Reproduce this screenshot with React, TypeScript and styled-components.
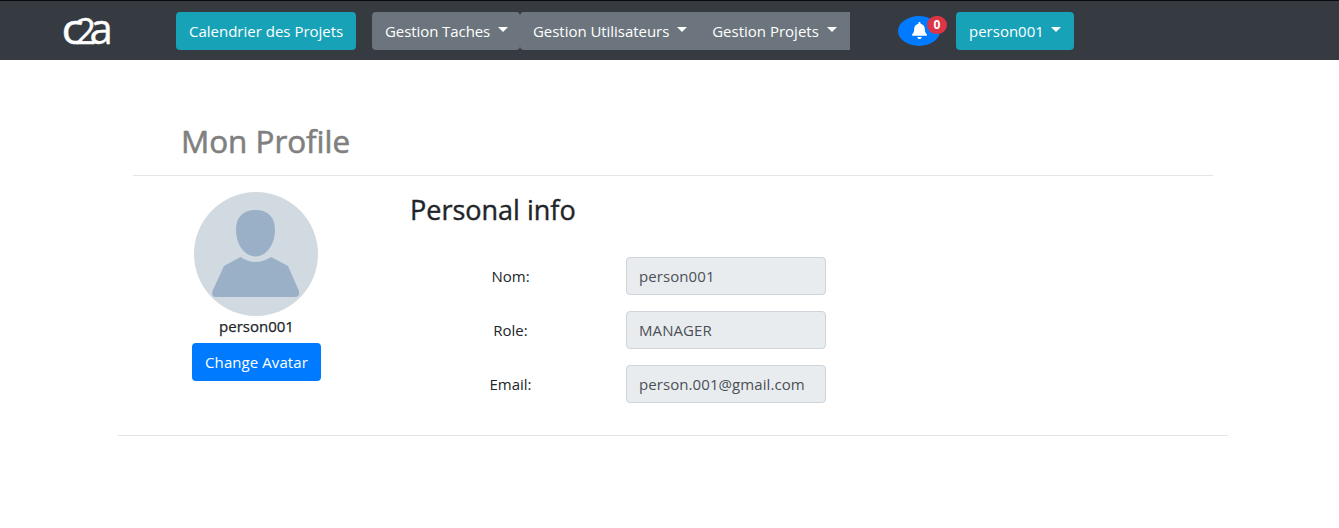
import React from "react";
import styled, { createGlobalStyle } from "styled-components";
import { FaBell } from "react-icons/fa";

const GlobalStyle = createGlobalStyle`
  *, *::before, *::after { box-sizing: border-box; }
  body {
    margin: 0;
    background: #fff;
    color: #212529;
    font-family: "Segoe UI", "Open Sans", "Noto Sans", sans-serif;
    font-size: 15px;
    line-height: 24px;
  }
`;

const Navbar = styled.header`
  display: flex;
  align-items: center;
  height: 60px;
  padding: 0 0 0 62px;
  background: #363a41;
  border-top: 1px solid #0c0c0e;
`;

const Logo = styled.svg`
  display: block;
  overflow: visible;
  width: 50px;
  height: 32px;
  margin-right: 64px;
  fill: #fff;
  stroke: #fff;
  stroke-width: 0.4px;
  font-family: "Open Sans", sans-serif;
`;

const Button = styled.button<{ $color: string; $width: number; $radius?: string }>`
  display: flex;
  align-items: center;
  flex: none;
  width: ${(p) => p.$width}px;
  height: 38px;
  padding: 0 0 0 13px;
  border: 0;
  border-radius: ${(p) => p.$radius ?? "4px"};
  background: ${(p) => p.$color};
  color: #fff;
  font: inherit;
  white-space: nowrap;
`;

const Label = styled.span<{ $width: number; $spacing?: number }>`
  width: ${(p) => p.$width}px;
  letter-spacing: ${(p) => p.$spacing ?? 0}px;
`;

const Caret = styled.span`
  margin: -3px 0 0 8px;
  border: 5px solid transparent;
  border-top-color: #fff;
  border-bottom: 0;
`;

const MenuGroup = styled.nav`
  display: flex;
  margin: 0 48px 0 16px;
`;

const Notifications = styled.button`
  position: relative;
  display: flex;
  align-items: center;
  justify-content: center;
  width: 42px;
  height: 30px;
  margin-right: 16px;
  padding: 0;
  border: 0;
  border-radius: 50%;
  background: #007bff;
  color: #fff;
`;

const Badge = styled.span`
  position: absolute;
  top: 0;
  right: -7px;
  width: 20px;
  height: 18px;
  border-radius: 10px;
  background: #dc3545;
  font: 700 12px/18px "Segoe UI", "Open Sans", sans-serif;
  text-align: center;
`;

const Page = styled.main`
  width: 1110px;
  margin: 59px 0 0 118px;
  padding-bottom: 32px;
  border-bottom: 1px solid #e5e5e5;
`;

const Title = styled.h1`
  height: 57px;
  margin: 0 15px;
  padding-left: 48px;
  border-bottom: 1px solid #e5e5e5;
  color: #808080;
  font-size: 31.4px;
  font-weight: 400;
  line-height: 44px;
  -webkit-text-stroke: 0.6px #808080;
`;

const Columns = styled.div`
  display: flex;
  padding: 16px 0 0 61px;
`;

const Profile = styled.section`
  display: flex;
  flex-direction: column;
  align-items: center;
  width: 154px;
`;

const Avatar = styled.svg`
  display: block;
  width: 124px;
  height: 124px;
`;

const UserName = styled.div`
  height: 27px;
  padding-left: 1px;
  line-height: 21px;
  -webkit-text-stroke: 0.25px #212529;
`;

const Info = styled.section`
  width: 440px;
  margin-left: 77px;
`;

const Heading = styled.h2`
  height: 65px;
  margin: 0;
  font-size: 27px;
  font-weight: 400;
  line-height: 36px;
  -webkit-text-stroke: 0.4px #212529;
`;

const Field = styled.label`
  display: flex;
  height: 38px;
  margin-bottom: 16px;
  line-height: 38px;
  &:last-child { margin-bottom: 0; }
`;

const FieldName = styled.span`
  width: 201px;
  margin-right: 15px;
  text-align: center;
`;

const Input = styled.input`
  width: 200px;
  height: 38px;
  padding: 0 12px;
  border: 1px solid #ced4da;
  border-radius: 4px;
  background: #e9ecef;
  color: #495057;
  font: inherit;
  letter-spacing: 0.08px;
`;

const teal = "#17a2b8";
const gray = "#6c757d";

const fields = [
  ["Nom:", "person001"],
  ["Role:", "MANAGER"],
  ["Email:", "person.001@gmail.com"],
];

export default function App() {
  return (
    <>
      <GlobalStyle />
      <Navbar>
        <Logo viewBox="0 0 50 32" role="img" aria-label="c2a">
          <text transform="translate(-.5 28.500) scale(1.1 1)" fontSize="42">c</text>
          <text transform="translate(13.5 29) scale(1 1)" fontSize="36">2</text>
          <text transform="translate(27.500 28.500) scale(1 1)" fontSize="42">a</text>
        </Logo>
        <Button $color={teal} $width={180}>
          <Label $width={154}>Calendrier des Projets</Label>
        </Button>
        <MenuGroup>
          <Button $color={gray} $width={148} $radius="4px">
            <Label $width={105} $spacing={-0.08}>Gestion Taches</Label>
            <Caret />
          </Button>
          <Button $color={gray} $width={179} $radius="4px 0 0 4px">
            <Label $width={136} $spacing={-0.04}>Gestion Utilisateurs</Label>
            <Caret />
          </Button>
          <Button $color={gray} $width={151} $radius="0">
            <Label $width={107}>Gestion Projets</Label>
            <Caret />
          </Button>
        </MenuGroup>
        <Notifications aria-label="Notifications">
          <FaBell size={17} />
          <Badge>0</Badge>
        </Notifications>
        <Button $color={teal} $width={118}>
          <Label $width={74}>person001</Label>
          <Caret />
        </Button>
      </Navbar>
      <Page>
        <Title>Mon Profile</Title>
        <Columns>
          <Profile>
            <Avatar viewBox="0 0 124 124" aria-hidden="true">
              <circle cx="62" cy="62" r="62" fill="#d1d9e1" />
              <path
                fill="#9ab0c7"
                d="M61.500 18C74 18 81 25 81 38C81 53 72 64.500 61.500 64.500S42 53 42 38C42 25 49 18 61.500 18ZM46.500 65Q61.500 75 77 65L94 74L105 99Q106 105 101 105H22Q17 105 18.500 99L30 74Z"
              />
            </Avatar>
            <UserName>person001</UserName>
            <Button $color="#007bff" $width={129}>
              <Label $width={104} $spacing={0.08}>Change Avatar</Label>
            </Button>
          </Profile>
          <Info>
            <Heading>Personal info</Heading>
            {fields.map(([name, value]) => (
              <Field key={name}>
                <FieldName>{name}</FieldName>
                <Input value={value} readOnly />
              </Field>
            ))}
          </Info>
        </Columns>
      </Page>
    </>
  );
}
